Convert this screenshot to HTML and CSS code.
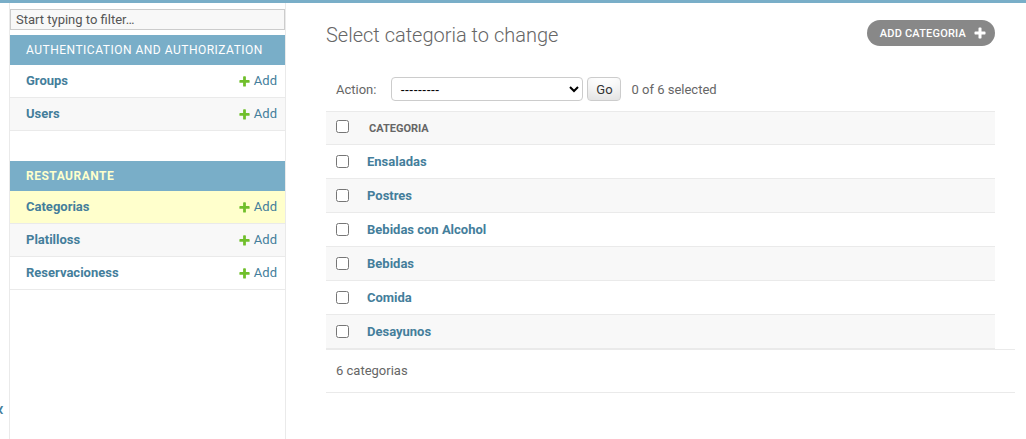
FILE: index.html
```html
<!DOCTYPE html>
<html lang="en">
<head>
<meta charset="utf-8">
<title>Select categoria to change</title>
<link rel="stylesheet" href="styles.css">
</head>
<body>
<div class="topbar"></div>
<div class="main">
  <div class="toggle"><span class="toggle-glyph">«</span></div>
  <nav class="sidebar">
    <input class="filter" type="search" placeholder="Start typing to filter…">
    <div class="module">
      <div class="caption">Authentication and Authorization</div>
      <div class="row"><a class="model">Groups</a><a class="addlink"><svg class="plus" viewBox="0 0 1792 1792"><path d="M1600 796v192q0 40-28 68t-68 28h-416v416q0 40-28 68t-68 28h-192q-40 0-68-28t-28-68v-416h-416q-40 0-68-28t-28-68v-192q0-40 28-68t68-28h416v-416q0-40 28-68t68-28h192q40 0 68 28t28 68v416h416q40 0 68 28t28 68z"/></svg>Add</a></div>
      <div class="row alt"><a class="model">Users</a><a class="addlink"><svg class="plus" viewBox="0 0 1792 1792"><path d="M1600 796v192q0 40-28 68t-68 28h-416v416q0 40-28 68t-68 28h-192q-40 0-68-28t-28-68v-416h-416q-40 0-68-28t-28-68v-192q0-40 28-68t68-28h416v-416q0-40 28-68t68-28h192q40 0 68 28t28 68v416h416q40 0 68 28t28 68z"/></svg>Add</a></div>
    </div>
    <div class="module">
      <div class="caption current-app">Restaurante</div>
      <div class="row current"><a class="model">Categorias</a><a class="addlink"><svg class="plus" viewBox="0 0 1792 1792"><path d="M1600 796v192q0 40-28 68t-68 28h-416v416q0 40-28 68t-68 28h-192q-40 0-68-28t-28-68v-416h-416q-40 0-68-28t-28-68v-192q0-40 28-68t68-28h416v-416q0-40 28-68t68-28h192q40 0 68 28t28 68v416h416q40 0 68 28t28 68z"/></svg>Add</a></div>
      <div class="row alt"><a class="model">Platilloss</a><a class="addlink"><svg class="plus" viewBox="0 0 1792 1792"><path d="M1600 796v192q0 40-28 68t-68 28h-416v416q0 40-28 68t-68 28h-192q-40 0-68-28t-28-68v-416h-416q-40 0-68-28t-28-68v-192q0-40 28-68t68-28h416v-416q0-40 28-68t68-28h192q40 0 68 28t28 68v416h416q40 0 68 28t28 68z"/></svg>Add</a></div>
      <div class="row"><a class="model">Reservacioness</a><a class="addlink"><svg class="plus" viewBox="0 0 1792 1792"><path d="M1600 796v192q0 40-28 68t-68 28h-416v416q0 40-28 68t-68 28h-192q-40 0-68-28t-28-68v-416h-416q-40 0-68-28t-28-68v-192q0-40 28-68t68-28h416v-416q0-40 28-68t68-28h192q40 0 68 28t28 68v416h416q40 0 68 28t28 68z"/></svg>Add</a></div>
    </div>
  </nav>
  <main class="content">
    <div class="head">
      <h1>Select categoria to change</h1>
      <a class="tool-add">Add categoria <svg class="tool-plus" viewBox="0 0 1792 1792"><path d="M1600 796v192q0 40-28 68t-68 28h-416v416q0 40-28 68t-68 28h-192q-40 0-68-28t-28-68v-416h-416q-40 0-68-28t-28-68v-192q0-40 28-68t68-28h416v-416q0-40 28-68t68-28h192q40 0 68 28t28 68v416h416q40 0 68 28t28 68z"/></svg></a>
    </div>
    <div class="changelist">
      <div class="actions">
        <label class="action-label">Action:</label>
        <select class="action-select"><option>---------</option></select>
        <button class="go" type="button">Go</button>
        <span class="counter">0 of 6 selected</span>
      </div>
      <table class="results">
        <thead>
          <tr><th class="cb"><input type="checkbox"></th><th class="col">Categoria</th></tr>
        </thead>
        <tbody>
          <tr><td class="cb"><input type="checkbox"></td><td class="name"><a>Ensaladas</a></td></tr>
          <tr class="alt"><td class="cb"><input type="checkbox"></td><td class="name"><a>Postres</a></td></tr>
          <tr><td class="cb"><input type="checkbox"></td><td class="name"><a>Bebidas con Alcohol</a></td></tr>
          <tr class="alt"><td class="cb"><input type="checkbox"></td><td class="name"><a>Bebidas</a></td></tr>
          <tr><td class="cb"><input type="checkbox"></td><td class="name"><a>Comida</a></td></tr>
          <tr class="alt"><td class="cb"><input type="checkbox"></td><td class="name"><a>Desayunos</a></td></tr>
        </tbody>
      </table>
      <p class="paginator">6 categorias</p>
    </div>
  </main>
</div>
</body>
</html>
```
FILE: styles.css
```css
* { box-sizing: border-box; }
html, body { margin: 0; padding: 0; }
body {
  font-family: Roboto, "Liberation Sans", sans-serif;
  font-size: 13px;
  color: #333;
  background: #fff;
  height: 439px;
  overflow: hidden;
}
a { text-decoration: none; color: #447e9b; cursor: pointer; }

.topbar { height: 3px; background: #79aec8; }
.main { display: flex; height: 436px; }

.toggle {
  flex: 0 0 10px;
  border-right: 1px solid #eaeaea;
  display: flex;
  justify-content: flex-end;
  align-items: flex-start;
  overflow: hidden;
}
.toggle-glyph {
  flex-shrink: 0;
  margin-top: 395px;
  margin-right: 5px;
  font-size: 20px;
  font-weight: bold;
  line-height: 1;
  color: #447e9b;
}

.sidebar { flex: 0 0 276px; border-right: 1px solid #eaeaea; }
.filter {
  display: block;
  width: 100%;
  height: 21px;
  margin: 6px 0 5px;
  padding: 2px 5px;
  border: 1px solid #ccc;
  background: #f8f8f8;
  font-family: Roboto, "Liberation Sans", sans-serif;
  font-size: 13px;
  color: #333;
  outline: none;
}
.filter::placeholder { color: #555; opacity: 1; }

.module { margin-bottom: 30px; }
.caption {
  background: #79aec8;
  color: #fff;
  font-size: 12px;
  line-height: 14px;
  padding: 8px 16px;
  letter-spacing: 0.5px;
  text-transform: uppercase;
  white-space: nowrap;
  overflow: hidden;
}
.caption.current-app { color: #ffc; font-weight: bold; }

.row {
  display: flex;
  justify-content: space-between;
  align-items: center;
  height: 33px;
  padding: 0 8px 0 16px;
  border-bottom: 1px solid #eaeaea;
  line-height: 16px;
}
.row.alt { background: #f8f8f8; }
.row.current { background: #ffc; }
.model { font-weight: bold; }
.addlink { display: inline-flex; align-items: center; gap: 3px; }
.plus { width: 13px; height: 13px; fill: #70bf2b; }

.content { flex: 1; padding: 0 31px 0 40px; min-width: 0; }
.head {
  display: flex;
  justify-content: space-between;
  align-items: flex-start;
  height: 26px;
  margin-top: 17px;
}
.head h1 {
  margin: 2px 0 0;
  font-size: 20px;
  line-height: 26px;
  font-weight: 300;
  color: #666;
}
.tool-add {
  display: inline-flex;
  align-items: center;
  gap: 7px;
  height: 26px;
  padding: 0 8px 0 13px;
  border-radius: 15px;
  background: #888;
  color: #fff;
  font-size: 11px;
  font-weight: 500;
  letter-spacing: 0.2px;
  text-transform: uppercase;
}
.tool-plus { width: 14px; height: 14px; fill: #fff; }

.actions {
  display: flex;
  align-items: center;
  height: 44px;
  margin-top: 21px;
  padding: 0 10px;
  color: #666;
}
.action-select {
  width: 192px;
  height: 24px;
  margin-left: 15px;
  padding: 0 0 0 4px;
  border: 1px solid #ccc;
  border-radius: 4px;
  background: #fff;
  color: #000;
  font-family: "Liberation Sans", Arial, sans-serif;
  font-size: 13px;
}
.go {
  height: 24px;
  width: 34px;
  margin-left: 4px;
  padding: 0;
  border: 1px solid #ccc;
  border-radius: 4px;
  background: #fff;
  box-shadow: 0 -15px 20px -10px rgba(0,0,0,0.15) inset;
  font-family: Roboto, "Liberation Sans", sans-serif;
  font-size: 13px;
  color: #333;
}
.counter { margin-left: 10px; }

.results { width: 100%; border-collapse: separate; border-spacing: 0; }
.results th, .results td { text-align: left; vertical-align: middle; }
.results thead th {
  background: #f8f8f8;
  border-top: 1px solid #eaeaea;
  border-bottom: 1px solid #eaeaea;
  height: 34px;
  padding: 0;
  color: #666;
  font-size: 11px;
  font-weight: bold;
  text-transform: uppercase;
}
.results .cb { width: 31px; padding: 0 8px 0 10px; line-height: 0; }
.results thead th.col { padding-left: 12px; }
.results input[type=checkbox] { margin: 0; width: 13px; height: 13px; vertical-align: middle; }
.results thead th.cb input { position: relative; top: -2px; }
.results tbody td {
  height: 34px;
  padding: 0;
  border-bottom: 1px solid #eaeaea;
}
.results tbody td.cb { padding: 0 8px 0 10px; }
.results tbody td.name { padding-left: 10px; }
.results tbody td.name a { font-weight: bold; }
.results tbody tr.alt td { background: #f8f8f8; }

.paginator {
  margin: 0 -20px 0 0;
  padding: 12px 10px;
  line-height: 18px;
  border-top: 1px solid #eaeaea;
  border-bottom: 1px solid #eaeaea;
  color: #666;
}
```
